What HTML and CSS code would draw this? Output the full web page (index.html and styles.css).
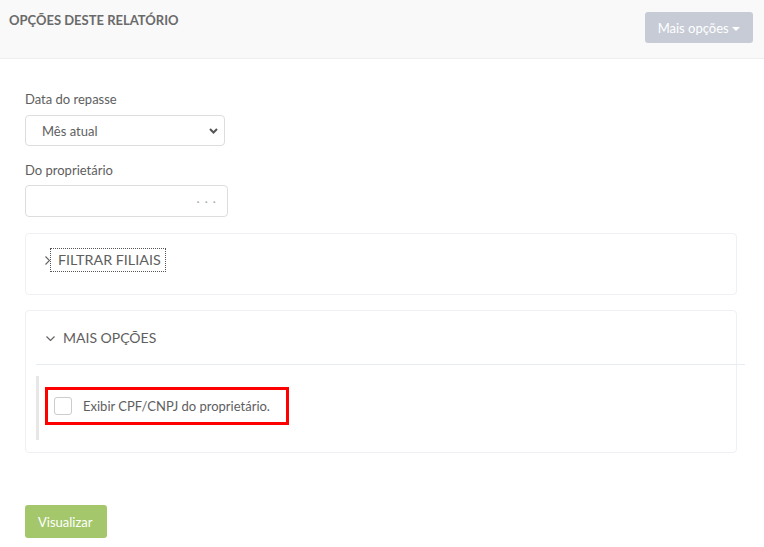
FILE: index.html
```html
<!DOCTYPE html>
<html>

<head>
    <title>Opções deste relatório</title>
    <meta charset="utf-8">
    <meta name="viewport" content="width=device-width, initial-scale=1.0">
    <link rel="stylesheet" href="styles.css">
</head>

<body>

    <header class="topo">
        <h1>Opções deste relatório</h1>
        <button class="mais">Mais opções <span class="caret"></span></button>
    </header>

    <main class="conteudo">
        <label class="rotulo">Data do repasse</label>
        <div class="select">
            <span>Mês atual</span>
            <svg width="9" height="6" viewBox="0 0 9 6"><path d="M1 1 L4.5 4.5 L8 1" fill="none" stroke="#555" stroke-width="2"/></svg>
        </div>

        <label class="rotulo">Do proprietário</label>
        <div class="campo">
            <span class="pontos">· · ·</span>
        </div>

        <section class="painel fechado">
            <div class="painel-titulo">
                <svg width="5" height="9" viewBox="0 0 5 9"><path d="M0.5 0.5 L4.5 4.5 L0.5 8.5" fill="none" stroke="#666" stroke-width="1.2"/></svg>
                <a class="foco">FILTRAR FILIAIS</a>
            </div>
        </section>

        <section class="painel aberto">
            <div class="painel-titulo">
                <svg width="9" height="5" viewBox="0 0 9 5"><path d="M0.5 0.5 L4.5 4.5 L8.5 0.5" fill="none" stroke="#666" stroke-width="1.2"/></svg>
                <span>MAIS OPÇÕES</span>
            </div>
            <div class="linha"></div>
            <div class="opcoes">
                <div class="destaque">
                    <span class="check"></span>
                    <span>Exibir CPF/CNPJ do proprietário.</span>
                </div>
            </div>
        </section>

        <button class="visualizar">Visualizar</button>
    </main>

</body>

</html>
```

FILE: styles.css
```css
body {
    margin: 0;
    font-family: Lato, "Open Sans", sans-serif;
    color: #5e5e5e;
    background: #ffffff;
}

.topo {
    height: 59px;
    box-sizing: border-box;
    padding: 12px 11px 0 9px;
    background: #f9f9f9;
    border-bottom: 1px solid #eeeeee;
    display: flex;
    justify-content: space-between;
    align-items: flex-start;
}

.topo h1 {
    margin: 0;
    font-size: 13px;
    line-height: 17px;
    font-weight: bold;
    text-transform: uppercase;
    color: #6a6a6a;
}

.mais {
    height: 31px;
    padding: 0 13px 0 13px;
    border: none;
    border-radius: 3px;
    background: #c6cbd6;
    color: #fff;
    font-family: inherit;
    font-size: 13px;
}

.caret {
    display: inline-block;
    width: 0;
    height: 0;
    margin-left: 0;
    vertical-align: middle;
    border-top: 4px solid #fff;
    border-left: 4px solid transparent;
    border-right: 4px solid transparent;
}

.conteudo {
    padding: 31px 27px 0 25px;
}

.rotulo {
    display: block;
    font-size: 13px;
    line-height: 18px;
    margin-bottom: 7px;
}

.select {
    width: 200px;
    height: 31px;
    box-sizing: border-box;
    padding: 0 6px 0 16px;
    border: 1px solid #dddddd;
    border-radius: 4px;
    display: flex;
    align-items: center;
    justify-content: space-between;
    font-size: 13px;
    margin-bottom: 15px;
}

.campo {
    width: 203px;
    height: 32px;
    box-sizing: border-box;
    padding: 0 10px;
    border: 1px solid #dddddd;
    border-radius: 4px;
    display: flex;
    align-items: center;
    justify-content: flex-end;
    margin-top: -1px;
}

.pontos {
    color: #aaa;
    font-size: 12px;
    letter-spacing: 1px;
}

.painel {
    border: 1px solid #eef0f3;
    border-radius: 4px;
    margin-top: 16px;
}

.fechado {
    height: 62px;
    box-sizing: border-box;
    padding: 15px 19px;
}

.fechado .painel-titulo {
    display: flex;
    align-items: center;
    gap: 1px;
    font-size: 14.3px;
}

.foco {
    padding: 3px 4px 3px 7px;
    line-height: 16px;
    outline: 1px dotted #555;
}

.aberto {
    margin-top: 15px;
    padding: 0 0 12px 10px;
}

.aberto .painel-titulo {
    display: flex;
    align-items: center;
    gap: 8px;
    padding: 17px 0 16px 10px;
    line-height: 20px;
    font-size: 14px;
}

.linha {
    height: 1px;
    background: #e8ebf0;
    margin-right: -9px;
}

.opcoes {
    margin-top: 11px;
    width: 700px;
    padding: 11px 0 15px 6px;
    border-left: 3px solid #e6e6e6;
}

.destaque {
    display: inline-flex;
    align-items: center;
    height: 38px;
    box-sizing: border-box;
    padding: 0 16px 0 6px;
    border: 3px solid #ff0000;
    font-size: 13px;
    gap: 11px;
}

.check {
    width: 18px;
    height: 18px;
    box-sizing: border-box;
    border: 1px solid #cccccc;
    border-radius: 3px;
}

.visualizar {
    margin-top: 52px;
    height: 33px;
    padding: 0 14px 0 13px;
    border: none;
    border-radius: 3px;
    background: #a3c76a;
    color: #fff;
    font-family: inherit;
    font-size: 13px;
}
```
